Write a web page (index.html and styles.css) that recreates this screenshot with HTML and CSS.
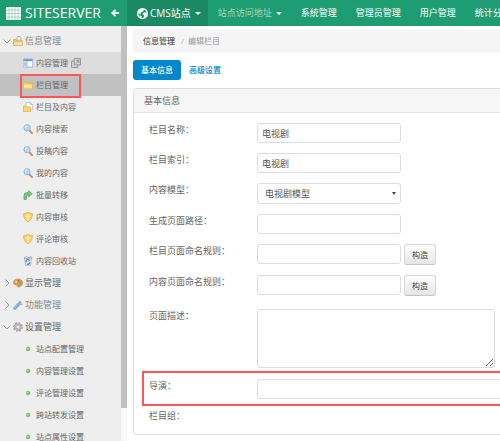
FILE: index.html
```html
<!DOCTYPE html>
<html lang="zh-CN">
<head>
    <meta charset="UTF-8">
    <meta name="viewport" content="width=device-width, initial-scale=1.0">
    <title>编辑栏目</title>
    <link rel="stylesheet" href="styles.css">
</head>
<body>
    <!-- shared icons -->
    <svg class="sprite" aria-hidden="true">
        <symbol id="open" viewBox="0 0 8 8"><path d="M.5 2.500L4 6l3.500-3.500" fill="none" stroke="#999"/></symbol>
        <symbol id="closed" viewBox="0 0 8 8"><path d="M2.500.5L6 4 2.500 7.500" fill="none" stroke="#999"/></symbol>
        <symbol id="folder" viewBox="0 0 16 16">
            <path d="M1 2.500h5l1.500 2H15V14H1z" fill="#f7c552" stroke="#e5b04a"/>
            <path d="M1.500 7h13v6.500h-13z" fill="#ffe08a"/>
            <path d="M3 10h6" stroke="#fff6cf" stroke-width="2"/>
        </symbol>
        <symbol id="folder-page" viewBox="0 0 16 16">
            <path d="M5 .5h6.500L15 4v9H5z" fill="#fff" stroke="#aaa"/>
            <path d="M11.500.5V4H15" fill="none" stroke="#aaa"/>
            <path d="M.5 6.500h4l1 1.500H12v7.500H.5z" fill="#ffd672" stroke="#d9a440"/>
        </symbol>
        <symbol id="folder-lock" viewBox="0 0 16 16">
            <path d="M6 8V4a3.500 3.500 0 017 0v4" fill="#e6ebf2" stroke="#a9b3c1" stroke-width="1.500"/>
            <path d="M.5 5.500h4l1.500 2h9V15H.5z" fill="#f7c55f" stroke="#d8a550"/>
            <path d="M1.500 10h13v4h-13z" fill="#ffe2a0"/>
        </symbol>
        <symbol id="layout" viewBox="0 0 16 16">
            <path d="M.5 1.500h15v13H.5z" fill="#fff" stroke="#6d9bd0"/>
            <path d="M1 2h14v3H1z" fill="#5f96d8"/>
            <path d="M1 5h5v9H1z" fill="#c9dff5"/>
            <path d="M6.500 5v9M2 8h3M2 11h3" stroke="#6d9bd0"/>
        </symbol>
        <symbol id="search" viewBox="0 0 16 16">
            <path d="M10 10l4.500 4.500" stroke="#c58a56" stroke-width="3" stroke-linecap="round"/>
            <circle cx="6.500" cy="6" r="5" fill="#b5d8f7" stroke="#8fb3d8" stroke-width="1.500"/>
            <path d="M3.500 6a3 3 0 013-3" fill="none" stroke="#fff" stroke-width="1.500"/>
        </symbol>
        <symbol id="turn" viewBox="0 0 16 16">
            <path d="M1.500 15V9a5 5 0 015-5H9V1l6 5-6 5V8H7.500A2 2 0 005.500 10v5z" fill="#79c47b" stroke="#4f9f58"/>
        </symbol>
        <symbol id="shield" viewBox="0 0 16 16">
            <path d="M1 2.500c3 0 4-.5 7-2 3 1.500 4 2 7 2C15 9 13 13 8 15.500 3 13 1 9 1 2.500z" fill="#ffd45c" stroke="#d8a63e"/>
            <path d="M8 3v10M4 7h8" stroke="#fff4c4" stroke-width="2"/>
        </symbol>
        <symbol id="bin" viewBox="0 0 16 16">
            <path d="M2.500 3.500h11L12 15.500H4z" fill="#d8e5ee" stroke="#9fb0bd"/>
            <path d="M1.500 3.500L5 1l4 1.500L13 1l1.500 2.500z" fill="#fff" stroke="#888"/>
            <path d="M10.500 7.500A3 3 0 105 10M6 12.500a3 3 0 005-2.500" fill="none" stroke="#3f7ed0" stroke-width="1.800"/>
        </symbol>
        <symbol id="palette" viewBox="0 0 16 16">
            <path d="M8 1.500c5 0 7.500 3 7.500 6.500S12.500 14.500 8 14.500c-2 0-1-2.500-2.500-3.500S.5 11 .5 7.500 4 1.500 8 1.500z" fill="#dd9a55" stroke="#c78a50"/>
            <circle cx="5" cy="6" r="1.800" fill="#f2e25d"/>
            <circle cx="9" cy="4.500" r="1.500" fill="#e65542"/>
            <circle cx="12.500" cy="7.500" r="1.600" fill="#5f9be0"/>
            <circle cx="10" cy="11.500" r="1.600" fill="#78b95a"/>
        </symbol>
        <symbol id="wrench" viewBox="0 0 16 16">
            <path d="M8.500 7.500L13 3" stroke="#9aa5b3" stroke-width="3"/>
            <path d="M10 1.500L9.500 5l2 2 4-.5" fill="none" stroke="#a8b1bd" stroke-width="2"/>
            <path d="M3 13l5.500-5.500" stroke="#7fa8e6" stroke-width="5" stroke-linecap="round"/>
            <path d="M3 12l4.500-4.500" stroke="#b5cff5" stroke-linecap="round"/>
        </symbol>
        <symbol id="gear" viewBox="0 0 16 16">
            <circle cx="8" cy="8" r="6.500" fill="none" stroke="#999" stroke-width="2.500" stroke-dasharray="2.900 2.200"/>
            <circle cx="8" cy="8" r="4.200" fill="none" stroke="#b4b4b4" stroke-width="3.500"/>
        </symbol>
        <symbol id="dot" viewBox="0 0 16 16">
            <circle cx="8" cy="8" r="3.600" fill="#7cc47e"/>
            <circle cx="7" cy="7" r="1.200" fill="#b8e2b6"/>
        </symbol>
        <symbol id="windows" viewBox="0 0 16 16">
            <path d="M5 1h10v10H5zM4 5H1v10h10v-3" fill="none" stroke="#888" stroke-width="1.500"/>
            <path d="M7.500 9L12 4.500M8.500 4H12.500V8" fill="none" stroke="#888" stroke-width="1.500"/>
        </symbol>
    </svg>

    <header class="navbar">
        <div class="brand">
            <svg class="logo" viewBox="0 0 15 13" aria-hidden="true">
                <path d="M0 0h15v13H0z" fill="#fff"/>
                <path d="M3 0v13M6 0v13M9 0v13M12 0v13M0 3h15M0 6.500h15M0 10h15" stroke="#74bfa3" stroke-width=".6"/>
            </svg>
            <span class="brand-name">SITESERVER</span>
            <svg class="back" viewBox="0 0 8 8" aria-hidden="true"><path d="M4.500.8L1.200 4l3.300 3.200M1.500 4H8" fill="none" stroke="#fff" stroke-width="1.800"/></svg>
        </div>
        <nav class="nav">
            <a href="#" class="nav-link active">
                <svg class="globe" viewBox="0 0 16 16" aria-hidden="true">
                    <circle cx="8" cy="8" r="7" fill="#1b8a64" stroke="#fff" stroke-width="2"/>
                    <path d="M2 4l4-3 4 1-1 3-3 1-1 3-3-1zM9 7l4-1 2 3-3 5-2-1v-3L8 9zM4 10l3 2-1 2-2-1z" fill="#fff"/>
                </svg>CMS站点<span class="caret"></span>
            </a>
            <a href="#" class="nav-link muted">站点访问地址<span class="caret"></span></a>
            <a href="#" class="nav-link">系统管理</a>
            <a href="#" class="nav-link">管理员管理</a>
            <a href="#" class="nav-link">用户管理</a>
            <a href="#" class="nav-link">统计分析</a>
        </nav>
    </header>

    <div class="layout">
        <aside class="sidebar">
            <ul class="menu">
                <li><a href="#" class="group light"><svg class="arrow"><use href="#open"/></svg><svg class="icon"><use href="#folder-lock"/></svg>信息管理</a></li>
                <li><a href="#" class="item hover"><svg class="icon"><use href="#layout"/></svg>内容管理<svg class="icon"><use href="#windows"/></svg></a></li>
                <li class="marked"><a href="#" class="item current"><svg class="icon"><use href="#folder"/></svg>栏目管理</a></li>
                <li><a href="#" class="item"><svg class="icon"><use href="#folder-page"/></svg>栏目及内容</a></li>
                <li><a href="#" class="item"><svg class="icon"><use href="#search"/></svg>内容搜索</a></li>
                <li><a href="#" class="item"><svg class="icon"><use href="#search"/></svg>投稿内容</a></li>
                <li><a href="#" class="item"><svg class="icon"><use href="#search"/></svg>我的内容</a></li>
                <li><a href="#" class="item"><svg class="icon"><use href="#turn"/></svg>批量转移</a></li>
                <li><a href="#" class="item"><svg class="icon"><use href="#shield"/></svg>内容审核</a></li>
                <li><a href="#" class="item"><svg class="icon"><use href="#shield"/></svg>评论审核</a></li>
                <li><a href="#" class="item"><svg class="icon"><use href="#bin"/></svg>内容回收站</a></li>
                <li><a href="#" class="group"><svg class="arrow"><use href="#closed"/></svg><svg class="icon"><use href="#palette"/></svg>显示管理</a></li>
                <li><a href="#" class="group light"><svg class="arrow"><use href="#closed"/></svg><svg class="icon"><use href="#wrench"/></svg>功能管理</a></li>
                <li><a href="#" class="group"><svg class="arrow"><use href="#open"/></svg><svg class="icon"><use href="#gear"/></svg>设置管理</a></li>
                <li><a href="#" class="item"><svg class="icon"><use href="#dot"/></svg>站点配置管理</a></li>
                <li><a href="#" class="item"><svg class="icon"><use href="#dot"/></svg>内容管理设置</a></li>
                <li><a href="#" class="item"><svg class="icon"><use href="#dot"/></svg>评论管理设置</a></li>
                <li><a href="#" class="item"><svg class="icon"><use href="#dot"/></svg>跨站转发设置</a></li>
                <li><a href="#" class="item"><svg class="icon"><use href="#dot"/></svg>站点属性设置</a></li>
            </ul>
        </aside>
        <div class="scrollbar"><div class="thumb"></div></div>

        <main class="content">
            <div class="breadcrumb"><strong>信息管理</strong><span class="divider">/</span><span>编辑栏目</span></div>

            <div class="tabs">
                <a href="#" class="tab selected">基本信息</a>
                <a href="#" class="tab">高级设置</a>
            </div>

            <form class="panel">
                <h3 class="panel-title">基本信息</h3>
                <div class="panel-body">
                    <div class="row">
                        <label for="name">栏目名称：</label>
                        <input type="text" id="name" value="电视剧">
                    </div>
                    <div class="row">
                        <label for="index">栏目索引：</label>
                        <input type="text" id="index" value="电视剧">
                    </div>
                    <div class="row">
                        <label for="model">内容模型：</label>
                        <div class="select">
                            <select id="model"><option>电视剧模型</option></select>
                        </div>
                    </div>
                    <div class="row">
                        <label for="path">生成页面路径：</label>
                        <input type="text" id="path">
                    </div>
                    <div class="row">
                        <label for="channel-rule">栏目页面命名规则：</label>
                        <input type="text" id="channel-rule">
                        <button type="button" class="btn">构造</button>
                    </div>
                    <div class="row">
                        <label for="content-rule">内容页面命名规则：</label>
                        <input type="text" id="content-rule">
                        <button type="button" class="btn">构造</button>
                    </div>
                    <div class="row tall">
                        <label for="description">页面描述：</label>
                        <textarea id="description"></textarea>
                    </div>
                    <div class="row framed">
                        <label for="director">导演：</label>
                        <input type="text" id="director" class="wide">
                    </div>
                    <div class="row last">
                        <span>栏目组：</span>
                    </div>
                </div>
            </form>
        </main>
    </div>
</body>
</html>
```

FILE: styles.css
```css
*,
*::after {
    margin: 0;
    padding: 0;
    box-sizing: border-box;
}

body {
    display: flex;
    flex-direction: column;
    height: 100vh;
    overflow: hidden;
    background-color: #fff;
    color: #666;
    font-family: "Open Sans", "Noto Sans CJK SC", sans-serif;
    font-size: 9px;
    line-height: 12px;
}

a {
    color: inherit;
    text-decoration: none;
}

.sprite {
    display: none;
}

/* top bar */
.navbar {
    display: flex;
    flex: none;
    height: 26px;
    background-color: #1f9d72;
    color: #fff;
    white-space: nowrap;
}

.brand {
    display: flex;
    flex: none;
    align-items: center;
    width: 127px;
    padding-left: 6px;
}

.logo {
    width: 15px;
    height: 13px;
    margin-right: 4px;
}

.brand-name {
    font-size: 14px;
    line-height: 20px;
}

.back {
    width: 8px;
    height: 8px;
    margin-left: 10px;
}

.nav {
    display: flex;
}

.nav-link {
    display: flex;
    align-items: center;
    padding: 0 9px 0 10px;
}

.nav-link.active {
    padding-right: 7px;
    background-color: #1b8a64;
    font-size: 10px;
}

.nav-link.muted {
    color: #a5d8c6;
}

.globe {
    width: 11px;
    height: 11px;
    margin-right: 2px;
}

.caret {
    margin-left: 4px;
    border: 3px solid transparent;
    border-top-color: #fff;
    border-bottom: 0;
}

.layout {
    display: flex;
    flex: 1;
    min-height: 0;
}

/* side menu */
.sidebar {
    flex: none;
    width: 121px;
    padding-top: 4px;
    background-color: #eee;
    overflow: hidden;
}

.menu {
    list-style: none;
}

.group,
.item {
    display: flex;
    align-items: center;
    height: 22px;
}

.group {
    gap: 2px;
    padding-left: 3px;
}

.group.light {
    color: #888;
}

.item {
    gap: 3px;
    padding-left: 23px;
    font-size: 8px;
}

.item.hover {
    background-color: #ddd;
}

.item.current {
    background-color: #c1c1c1;
}

.icon {
    width: 10px;
    height: 10px;
}

.arrow {
    width: 8px;
    height: 8px;
}

.marked {
    position: relative;
}

.marked::after {
    content: "";
    position: absolute;
    top: 0;
    left: 20px;
    width: 61px;
    height: 24px;
    border: 2px solid #f55;
}

.scrollbar {
    flex: none;
    width: 6px;
    background-color: #f8f8f8;
}

.thumb {
    height: 92%;
    background-color: #c0c0c0;
}

/* page */
.content {
    flex: 1;
    min-width: 0;
    padding: 3px 0 0 6px;
}

.breadcrumb {
    display: flex;
    align-items: center;
    height: 24px;
    padding-left: 10px;
    border-radius: 3px 0 0 3px;
    background-color: #f5f5f5;
    color: #999;
    font-size: 8px;
}

.breadcrumb strong {
    color: #555;
    font-weight: 500;
}

.divider {
    padding: 0 4px 0 6px;
    color: #bbb;
}

.tabs {
    display: flex;
    margin: 7px 0 8px;
}

.tab {
    padding: 4px 8px;
    border-radius: 3px;
    color: #08c;
    font-size: 8px;
    font-weight: 500;
}

.tab.selected {
    background-color: #08c;
    color: #fff;
}

.panel {
    border: 1px solid #ddd;
    border-right: 0;
    border-radius: 4px 0 0 4px;
}

.panel-title {
    padding: 6px 10px 5px;
    border-bottom: 1px solid #e5e5e5;
    border-radius: 4px 0 0 0;
    background-color: #f6f6f6;
    font-size: 9px;
    font-weight: 400;
}

.panel-body {
    padding: 10px 0 12px 8px;
}

.row {
    display: flex;
    align-items: flex-start;
    gap: 3px;
    margin-bottom: 10px;
    padding-left: 7px;
}

.row label {
    flex: none;
    width: 105px;
    padding-top: 1px;
}

input,
select,
textarea {
    width: 144px;
    height: 20px;
    padding: 0 4px;
    border: 1px solid #ddd;
    border-radius: 3px;
    background-color: #fff;
    color: #555;
    font: inherit;
}

.select {
    position: relative;
}

.select::after {
    content: "";
    position: absolute;
    top: 9px;
    right: 5px;
    border: 2px solid transparent;
    border-top: 3px solid #444;
    border-bottom: 0;
}

select {
    display: block;
    height: 21px;
    padding: 0 7px;
    appearance: none;
}

textarea {
    width: 238px;
    height: 59px;
}

.btn {
    width: 32px;
    height: 21px;
    border: 1px solid #d5d5d5;
    border-bottom-color: #c4c4c4;
    border-radius: 3px;
    background: linear-gradient(#fff, #e6e6e6);
    color: #444;
    font: inherit;
    font-size: 8px;
}

.row.tall {
    margin: 13px 0 3px;
}

.row.framed {
    margin-bottom: 3px;
    padding: 6px 0 5px 5px;
    border: 2px solid #f55;
    border-right: 0;
}

.wide {
    flex: 1;
    border-right: 0;
    border-radius: 3px 0 0 3px;
}

.row.last {
    margin-bottom: 0;
    padding-top: 1px;
}
```
